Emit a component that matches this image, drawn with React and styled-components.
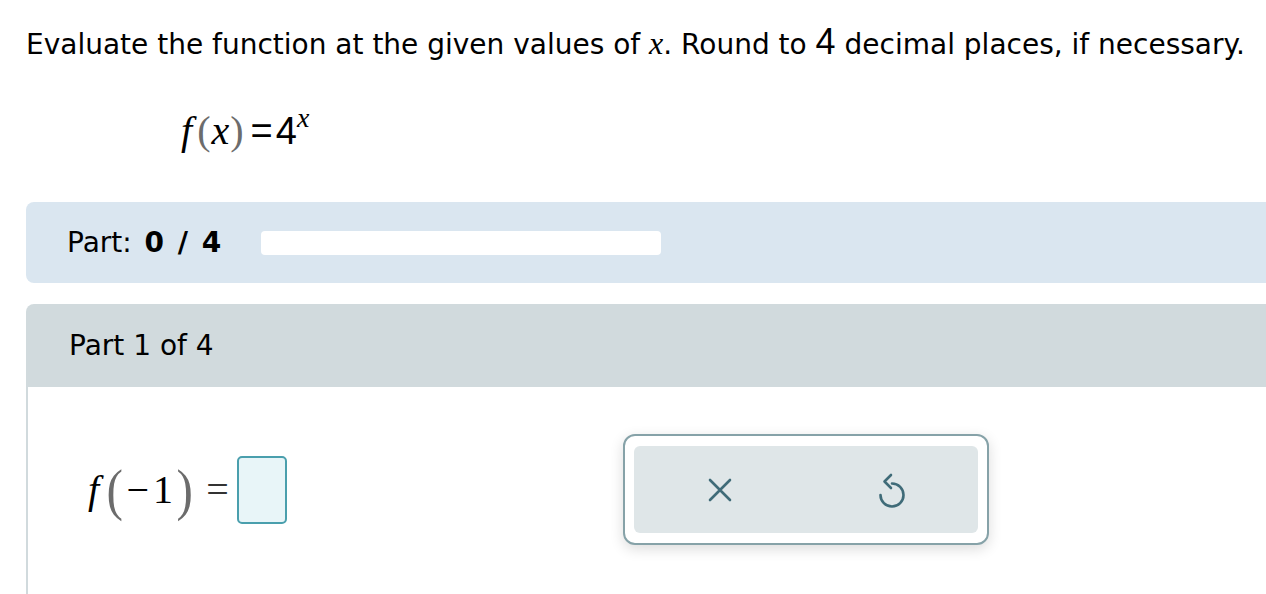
import React from 'react';
import styled, { createGlobalStyle } from 'styled-components';

const GlobalStyle = createGlobalStyle`
  body {
    margin: 0;
    background: #ffffff;
    font-family: "DejaVu Sans", Verdana, sans-serif;
    color: #000000;
    overflow: hidden;
  }
`;

const App = () => {
  return (
    <Page>
      <GlobalStyle />
      <Prompt>
        Evaluate the function at the given values of <MathVar>x</MathVar>. Round to{' '}
        <MathNum>4</MathNum> decimal places, if necessary.
      </Prompt>

      <Formula>
        <Italic>f</Italic>
        <Paren $left>(</Paren>
        <Italic>x</Italic>
        <Paren>)</Paren>
        <Eq>=</Eq>
        <Digit>4</Digit>
        <Sup>x</Sup>
      </Formula>

      <ProgressBar>
        <PartLabel>
          Part: <b>0 / 4</b>
        </PartLabel>
        <Track />
      </ProgressBar>

      <Section>
        <SectionHeader>Part 1 of 4</SectionHeader>
        <SectionBody>
          <Equation>
            <Italic>f</Italic>
            <BigParen $left>(</BigParen>
            <Minus>−</Minus>
            <span>1</span>
            <BigParen>)</BigParen>
            <Equals>=</Equals>
            <AnswerBox />
          </Equation>

          <ButtonGroup>
            <ButtonTray>
              <ToolButton aria-label="clear">
                <svg width="24" height="24" viewBox="0 0 24 24" fill="none">
                  <path
                    d="M2 2 L22 22 M22 2 L2 22"
                    stroke="#3f6b78"
                    strokeWidth="2.6"
                    strokeLinecap="round"
                  />
                </svg>
              </ToolButton>
              <ToolButton aria-label="undo">
                <svg width="30" height="36" viewBox="0 0 30 36" fill="none">
                  <path
                    d="M15 11.5 A11.5 11.5 0 1 1 3.5 23"
                    stroke="#3f6b78"
                    strokeWidth="2.6"
                    strokeLinecap="round"
                  />
                  <path
                    d="M14 3 L7.5 9.5 L14 16"
                    stroke="#3f6b78"
                    strokeWidth="2.6"
                    strokeLinecap="round"
                    strokeLinejoin="round"
                  />
                </svg>
              </ToolButton>
            </ButtonTray>
          </ButtonGroup>
        </SectionBody>
      </Section>
    </Page>
  );
};

const Page = styled.main`
  padding: 22px 0 0 26px;
  width: 1300px;
`;

const Prompt = styled.p`
  margin: 0;
  font-size: 28px;
  line-height: 40px;
  white-space: nowrap;
`;

const MathVar = styled.span`
  font-family: "Liberation Serif", "Times New Roman", serif;
  font-style: italic;
  font-size: 32px;
`;

const MathNum = styled.span`
  font-family: "Liberation Sans", Arial, sans-serif;
  font-size: 36px;
`;

const Formula = styled.div`
  margin: 36px 0 0 155px;
  height: 60px;
  font-family: "Liberation Serif", "Times New Roman", serif;
  font-size: 40px;
  line-height: 60px;
  white-space: nowrap;
`;

const Italic = styled.span`
  font-family: "Liberation Serif", "Times New Roman", serif;
  font-style: italic;
`;

const Paren = styled.span`
  color: #6c6c6c;
  padding: 0 1px 0 ${({ $left }) => ($left ? '5px' : '1px')};
`;

const Eq = styled.span`
  font-family: "Liberation Sans", Arial, sans-serif;
  font-size: 38px;
  padding: 0 3px 0 6px;
`;

const Digit = styled.span`
  font-family: "Liberation Sans", Arial, sans-serif;
  font-size: 38px;
`;

const Sup = styled.sup`
  font-style: italic;
  font-size: 28px;
  vertical-align: 17px;
  line-height: 0;
`;

const ProgressBar = styled.section`
  margin-top: 41px;
  height: 81px;
  display: flex;
  align-items: center;
  gap: 40px;
  padding-left: 41px;
  background: #dae6f0;
  border-radius: 8px 0 0 8px;
`;

const PartLabel = styled.div`
  font-size: 28px;
  white-space: nowrap;
  word-spacing: 4px;

  b {
    font-weight: 700;
  }
`;

const Track = styled.div`
  width: 400px;
  height: 24px;
  background: #ffffff;
  border-radius: 4px;
`;

const Section = styled.section`
  margin-top: 21px;
`;

const SectionHeader = styled.header`
  height: 83px;
  display: flex;
  align-items: center;
  padding-left: 43px;
  font-size: 28px;
  background: #d1dadd;
  border-radius: 8px 0 0 0;
`;

const SectionBody = styled.div`
  border-left: 2px solid #d1dadd;
  height: 220px;
  padding: 47px 0 0 60px;
  display: flex;
  align-items: flex-start;
`;

const Equation = styled.div`
  width: 535px;
  flex-shrink: 0;
  display: flex;
  align-items: center;
  height: 111px;
  font-family: "Liberation Serif", "Times New Roman", serif;
  font-size: 40px;
  white-space: nowrap;
`;

const BigParen = styled.span`
  color: #6c6c6c;
  font-size: 58px;
  display: inline-block;
  transform: scaleX(0.85);
  margin: 0 ${({ $left }) => ($left ? '2px 0 6px' : '2px')};
`;

const Minus = styled.span`
  margin-right: 4px;
`;

const Equals = styled.span`
  margin: 0 8px 0 10px;
  color: #333;
`;

const AnswerBox = styled.div`
  width: 46px;
  height: 64px;
  border: 2px solid #4a9fad;
  border-radius: 5px;
  background: #e8f5f8;
`;

const ButtonGroup = styled.div`
  box-sizing: border-box;
  width: 366px;
  height: 111px;
  border: 2px solid #86a2a8;
  border-radius: 12px;
  background: #ffffff;
  box-shadow: 0 4px 14px rgba(0, 0, 0, 0.14);
  padding: 10px 9px;
`;

const ButtonTray = styled.div`
  height: 100%;
  display: flex;
  background: #dfe6e8;
  border-radius: 6px;
`;

const ToolButton = styled.button`
  flex: 1;
  display: flex;
  align-items: center;
  justify-content: center;
  background: none;
  border: none;
  padding: 0;
  cursor: pointer;
`;

export default App;
